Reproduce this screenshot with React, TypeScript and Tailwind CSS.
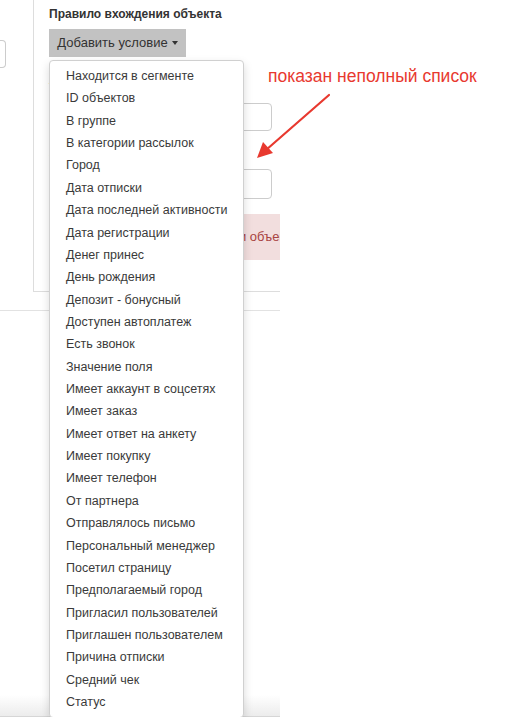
import React from 'react';

const conditions = [
  'Находится в сегменте',
  'ID объектов',
  'В группе',
  'В категории рассылок',
  'Город',
  'Дата отписки',
  'Дата последней активности',
  'Дата регистрации',
  'Денег принес',
  'День рождения',
  'Депозит - бонусный',
  'Доступен автоплатеж',
  'Есть звонок',
  'Значение поля',
  'Имеет аккаунт в соцсетях',
  'Имеет заказ',
  'Имеет ответ на анкету',
  'Имеет покупку',
  'Имеет телефон',
  'От партнера',
  'Отправлялось письмо',
  'Персональный менеджер',
  'Посетил страницу',
  'Предполагаемый город',
  'Пригласил пользователей',
  'Приглашен пользователем',
  'Причина отписки',
  'Средний чек',
  'Статус',
];

export default function App() {
  return (
    <div className="relative w-[517px] h-[717px] overflow-hidden bg-white font-['Liberation_Sans',Arial,sans-serif] text-[#333]">
      {/* page under the menu, cropped at 280px */}
      <div className="flex flex-col w-[280px] h-full overflow-hidden">
        <div className="flex">
          <div className="w-[33px] shrink-0 pt-[40px]">
            <div className="h-[28px] w-[6px] border border-l-0 border-[#ccc] rounded-r-[4px]" />
          </div>
          <div className="flex-1 min-w-0 h-[292px] border-l border-b border-[#ddd] pl-[15px] pr-[8px]">
            <div className="pt-[6px] text-[12px] leading-[16px] font-bold text-[#333]">
              Правило вхождения объекта
            </div>
            <button className="mt-[7px] h-[28px] w-[137px] bg-[#c2c2c2] text-[13px] text-[#333] flex items-center justify-center gap-[4px]">
              Добавить условие
              <span className="inline-block border-x-[3px] border-x-transparent border-t-[4px] border-t-[#333]" />
            </button>
            <div className="mt-[24px] text-[13px] leading-[14px] font-bold text-[#b4581c]">У</div>
            <div className="mt-[8px] h-[28px] border border-[#ccc] rounded-[4px]" />
            <div className="mt-[16px] text-[13px] leading-[14px] font-bold text-[#b4581c]">З</div>
            <div className="mt-[8px] h-[30px] border border-[#ccc] rounded-[4px]" />
            <div className="mt-[15px] -mr-[20px] h-[46px] bg-[#f2dede] flex items-center pl-[190px] text-[13px] text-[#a94442] whitespace-nowrap overflow-hidden">
              и объектов
            </div>
          </div>
        </div>
        <div className="mt-[18px] border-t border-[#e2e2e2]" />
        <div className="mt-auto h-[22px] bg-gradient-to-b from-white to-[#ececec] border-b border-[#d6d6d6]" />
      </div>

      {/* open dropdown */}
      <div className="absolute left-[49px] top-[60px] w-[195px] bg-white border border-[#d0d0d0] rounded-[4px] shadow-[0_4px_10px_rgba(0,0,0,0.15)] pt-[4px] pb-[4px]">
        {conditions.map((c) => (
          <div key={c} className="pl-[16px] text-[12.5px] leading-[22.36px] text-[#3a3a3a] whitespace-nowrap">
            {c}
          </div>
        ))}
      </div>

      {/* annotation */}
      <div className="absolute left-[268px] top-[65px] text-[17.5px] leading-[22px] text-[#e8392f] whitespace-nowrap">
        показан неполный список
      </div>
      <svg className="absolute left-[250px] top-[90px]" width="90" height="75" viewBox="0 0 90 75">
        <line x1="79" y1="5" x2="16" y2="60" stroke="#e8392f" strokeWidth="2.2" strokeLinecap="round" />
        <polygon points="7,68 13,52 23,63" fill="#e8392f" />
      </svg>
    </div>
  );
}
